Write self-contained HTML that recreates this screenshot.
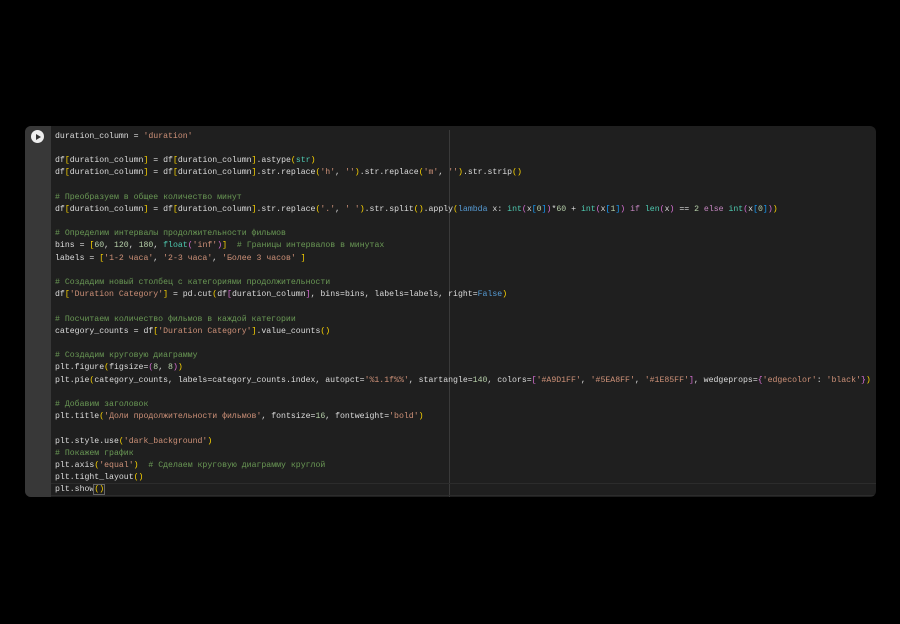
<!DOCTYPE html>
<html><head><meta charset="utf-8"><style>
html,body{margin:0;padding:0;background:#000;width:900px;height:624px;overflow:hidden}
.card{position:absolute;left:25px;top:126px;width:851px;height:371px;background:#1f1f1f;border-radius:6px;overflow:hidden}
.gut{position:absolute;left:0;top:0;width:26px;height:100%;background:#383838}
.play{position:absolute;left:6px;top:4px;width:13px;height:13px;border-radius:50%;background:#eee}
.play:after{content:"";position:absolute;left:5px;top:3.5px;border-left:5px solid #333;border-top:3px solid transparent;border-bottom:3px solid transparent}
.ruler{position:absolute;left:424px;top:4px;width:1px;height:367px;background:#3a3a3a}
.cur{position:absolute;left:26px;top:357px;width:825px;height:11px;border-top:1px solid #2c2c2c;border-bottom:1px solid #2c2c2c}
pre{position:absolute;left:30px;top:4.5px;margin:0;font-family:"Liberation Mono","DejaVu Sans Mono",monospace;font-size:8.2px;line-height:12.2px;color:#dcdcdc;white-space:pre}
.s{color:#ce9178}.c{color:#6a9955}.y{color:#ffd700}.p{color:#da70d6}.b{color:#179fff}.t{color:#4ec9b0}.k{color:#569cd6}.m{color:#c586c0}.n{color:#b5cea8}
</style></head><body>
<div class="card"><div class="gut"><div class="play"></div></div><div class="ruler"></div><div class="cur"></div>
<pre>duration_column = <span class="s">'duration'</span>

df<span class="y">[</span>duration_column<span class="y">]</span> = df<span class="y">[</span>duration_column<span class="y">]</span>.astype<span class="y">(</span><span class="t">str</span><span class="y">)</span>
df<span class="y">[</span>duration_column<span class="y">]</span> = df<span class="y">[</span>duration_column<span class="y">]</span>.str.replace<span class="y">(</span><span class="s">'h'</span>, <span class="s">''</span><span class="y">)</span>.str.replace<span class="y">(</span><span class="s">'m'</span>, <span class="s">''</span><span class="y">)</span>.str.strip<span class="y">()</span>

<span class="c"># Преобразуем в общее количество минут</span>
df<span class="y">[</span>duration_column<span class="y">]</span> = df<span class="y">[</span>duration_column<span class="y">]</span>.str.replace<span class="y">(</span><span class="s">'.'</span>, <span class="s">' '</span><span class="y">)</span>.str.split<span class="y">()</span>.apply<span class="y">(</span><span class="k">lambda</span> x: <span class="t">int</span><span class="p">(</span>x<span class="b">[</span><span class="n">0</span><span class="b">]</span><span class="p">)</span>*<span class="n">60</span> + <span class="t">int</span><span class="p">(</span>x<span class="b">[</span><span class="n">1</span><span class="b">]</span><span class="p">)</span> <span class="m">if</span> <span class="t">len</span><span class="p">(</span>x<span class="p">)</span> == <span class="n">2</span> <span class="m">else</span> <span class="t">int</span><span class="p">(</span>x<span class="b">[</span><span class="n">0</span><span class="b">]</span><span class="p">)</span><span class="y">)</span>

<span class="c"># Определим интервалы продолжительности фильмов</span>
bins = <span class="y">[</span><span class="n">60</span>, <span class="n">120</span>, <span class="n">180</span>, <span class="t">float</span><span class="p">(</span><span class="s">'inf'</span><span class="p">)</span><span class="y">]</span>  <span class="c"># Границы интервалов в минутах</span>
labels = <span class="y">[</span><span class="s">'1-2 часа'</span>, <span class="s">'2-3 часа'</span>, <span class="s">'Более 3 часов'</span> <span class="y">]</span>

<span class="c"># Создадим новый столбец с категориями продолжительности</span>
df<span class="y">[</span><span class="s">'Duration Category'</span><span class="y">]</span> = pd.cut<span class="y">(</span>df<span class="p">[</span>duration_column<span class="p">]</span>, bins=bins, labels=labels, right=<span class="k">False</span><span class="y">)</span>

<span class="c"># Посчитаем количество фильмов в каждой категории</span>
category_counts = df<span class="y">[</span><span class="s">'Duration Category'</span><span class="y">]</span>.value_counts<span class="y">()</span>

<span class="c"># Создадим круговую диаграмму</span>
plt.figure<span class="y">(</span>figsize=<span class="p">(</span><span class="n">8</span>, <span class="n">8</span><span class="p">)</span><span class="y">)</span>
plt.pie<span class="y">(</span>category_counts, labels=category_counts.index, autopct=<span class="s">'%1.1f%%'</span>, startangle=<span class="n">140</span>, colors=<span class="p">[</span><span class="s">'#A9D1FF'</span>, <span class="s">'#5EA8FF'</span>, <span class="s">'#1E85FF'</span><span class="p">]</span>, wedgeprops=<span class="p">{</span><span class="s">'edgecolor'</span>: <span class="s">'black'</span><span class="p">}</span><span class="y">)</span>

<span class="c"># Добавим заголовок</span>
plt.title<span class="y">(</span><span class="s">'Доли продолжительности фильмов'</span>, fontsize=<span class="n">16</span>, fontweight=<span class="s">'bold'</span><span class="y">)</span>

plt.style.use<span class="y">(</span><span class="s">'dark_background'</span><span class="y">)</span>
<span class="c"># Покажем график</span>
plt.axis<span class="y">(</span><span class="s">'equal'</span><span class="y">)</span>  <span class="c"># Сделаем круговую диаграмму круглой</span>
plt.tight_layout<span class="y">()</span>
plt.show<span class="y" style="outline:1px solid #666">()</span></pre>
</div>
</body></html>
